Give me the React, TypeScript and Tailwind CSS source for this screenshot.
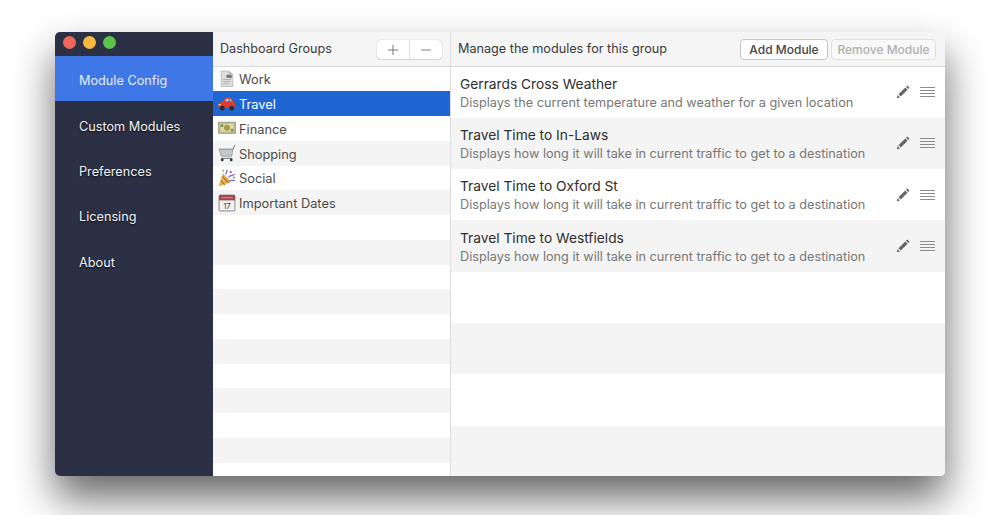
import React from 'react';
import { Plus, Minus } from 'lucide-react';

const navItems = ['Module Config', 'Custom Modules', 'Preferences', 'Licensing', 'About'];

const WorkIcon = () => (
  <svg width="18" height="18" viewBox="0 0 17 17">
    <path d="M3 1h7l4 3v11.500H3z" fill="#dededc" stroke="#aeaeab" strokeWidth="0.7" />
    <path d="M10 1v3h4z" fill="#bdbdb9" />
    <rect x="8" y="4.500" width="5" height="3" fill="#77777a" />
    <path d="M4.500 9h8M4.500 11h8M4.500 13h6" stroke="#aaaaa7" strokeWidth="0.8" />
  </svg>
);

const CarIcon = () => (
  <svg width="18" height="18" viewBox="0 0 17 17">
    <path d="M4.500 6l2.300-3.500h5.400l2 3.500 2 1.500v4.500H0.500V9l1.500-2z" fill="#dc3b30" />
    <path d="M6.500 6l1.500-2.500H10V6zM11 3.500h.8l1.300 2.500H11z" fill="#9fd0ee" />
    <circle cx="4" cy="12.500" r="2.300" fill="#2c2c30" />
    <circle cx="13" cy="12.500" r="2.300" fill="#2c2c30" />
    <rect x="0.500" y="8.500" width="2" height="1.300" fill="#f5d76b" />
  </svg>
);

const MoneyIcon = () => (
  <svg width="18" height="18" viewBox="0 0 17 17">
    <rect x="0.500" y="3" width="16" height="10.500" fill="#b9bd94" stroke="#8f9370" strokeWidth="0.7" />
    <rect x="2.500" y="4.500" width="12" height="7.500" fill="#e3d9a2" />
    <circle cx="8.500" cy="8.200" r="2.800" fill="#a39a52" />
    <path d="M2.500 5h2.500v2.500h-2.500zM12 9.200h2.500v2.500H12z" fill="#84905f" />
  </svg>
);

const CartIcon = () => (
  <svg width="18" height="18" viewBox="0 0 17 17">
    <path d="M1 5h13l2-4" fill="none" stroke="#85888c" strokeWidth="1.100" />
    <path d="M1 5l2 6.500h10L14 5z" fill="#c5c8cb" stroke="#909396" strokeWidth="0.7" />
    <path d="M3 13.500h10.500" stroke="#85888c" strokeWidth="1.100" />
    <circle cx="4" cy="15" r="1.300" fill="#333" />
    <circle cx="12.500" cy="15" r="1.300" fill="#333" />
  </svg>
);

const PartyIcon = () => (
  <svg width="18" height="18" viewBox="0 0 17 17">
    <path d="M0.500 16.500L4.500 4l8.500 8z" fill="#e5b64a" />
    <path d="M2.500 11l4 4M4 7l6 6" stroke="#b06a3c" strokeWidth="1.200" />
    <path d="M7 5c2-1 0-2.500 2-4M10 8c1-2.500 3-1 6-3M11 11c2-1 3 0 5 0" fill="none" stroke="#7a5ac8" strokeWidth="1.100" />
    <circle cx="12" cy="3" r="1.100" fill="#d8477a" />
    <circle cx="15" cy="8" r="1" fill="#4a9fd8" />
    <circle cx="5" cy="1.500" r="0.900" fill="#5ab55a" />
  </svg>
);

const CalendarIcon = () => (
  <svg width="18" height="18" viewBox="0 0 17 17">
    <rect x="1" y="1" width="15" height="15" rx="1" fill="#f2f2f0" stroke="#66666a" strokeWidth="0.7" />
    <rect x="1" y="1" width="15" height="5" fill="#a2454a" />
    <path d="M3 3.500h11" stroke="#d9a3a5" strokeWidth="0.8" />
    <text x="8.500" y="14" fontSize="7.500" textAnchor="middle" fill="#444" fontFamily="Inter, sans-serif">17</text>
  </svg>
);

const PencilIcon = () => (
  <svg width="14" height="14" viewBox="0 0 14 14">
    <path d="M9.300 2.400l2.300 2.300-6.800 6.800-2.300-2.300z" fill="#666" />
    <path d="M10 1.700l.8-.8c.3-.3.700-.3 1 0l1.300 1.300c.3.300.3.700 0 1l-.8.800z" fill="#666" />
    <path d="M1.600 10l2.400 2.400-3.200.9z" fill="#666" />
  </svg>
);

const Grip = () => (
  <div className="flex w-[15px] flex-col gap-[2px]">
    <div className="h-px bg-[#8c8c8c]" />
    <div className="h-px bg-[#8c8c8c]" />
    <div className="h-px bg-[#8c8c8c]" />
    <div className="h-px bg-[#8c8c8c]" />
  </div>
);

const groups = [
  { name: 'Work', icon: <WorkIcon /> },
  { name: 'Travel', icon: <CarIcon />, selected: true },
  { name: 'Finance', icon: <MoneyIcon /> },
  { name: 'Shopping', icon: <CartIcon />, gray: true },
  { name: 'Social', icon: <PartyIcon /> },
  { name: 'Important Dates', icon: <CalendarIcon />, gray: true },
];

const modules = [
  { title: 'Gerrards Cross Weather', desc: 'Displays the current temperature and weather for a given location' },
  { title: 'Travel Time to In-Laws', desc: 'Displays how long it will take in current traffic to get to a destination' },
  { title: 'Travel Time to Oxford St', desc: 'Displays how long it will take in current traffic to get to a destination' },
  { title: 'Travel Time to Westfields', desc: 'Displays how long it will take in current traffic to get to a destination' },
];

export default function App() {
  return (
    <div className="h-[515px] w-[1000px] overflow-hidden bg-white px-[55px] pt-[32px] font-['Inter','Liberation_Sans',sans-serif]">
      <div className="flex h-[444px] overflow-hidden rounded-[5px] shadow-[0_22px_40px_rgba(0,0,0,0.6)]">
        {/* sidebar */}
        <div className="w-[158px] shrink-0 bg-[#2b3044]">
          <div className="flex h-[24px] items-start gap-[7px] pl-[8px] pt-[4px]">
            <div className="h-[13px] w-[13px] rounded-full bg-[#f0665a]" />
            <div className="h-[13px] w-[13px] rounded-full bg-[#f5b93e]" />
            <div className="h-[13px] w-[13px] rounded-full bg-[#5ac44c]" />
          </div>
          {navItems.map((item, i) => (
            <div
              key={item}
              className={`flex h-[45.400px] items-center pl-[24px] pt-[4px] text-[12.700px] ${
                i === 0 ? 'bg-[#3f78e6] text-[#e4ecff]' : 'text-[#f2f2f2] [text-shadow:0_1px_2px_rgba(0,0,0,0.8)]'
              }`}
            >
              {item}
            </div>
          ))}
        </div>

        {/* groups */}
        <div className="flex w-[238px] shrink-0 flex-col border-r border-[#dcdcdc] bg-white">
          <div className="flex h-[34.500px] shrink-0 items-center justify-between border-b border-[#d8d8d8] bg-[#f5f5f5] pl-[7px] pr-[8px] pt-[2px]">
            <span className="text-[12.600px] text-[#3a3a3a]">Dashboard Groups</span>
            <div className="flex h-[19px] w-[65px] rounded-[4px] bg-white shadow-[0_0_1px_rgba(0,0,0,0.4),0_1px_1px_rgba(0,0,0,0.1)]">
              <div className="flex flex-1 items-center justify-center border-r border-[#e2e2e2] text-[#555]">
                <Plus size={16} strokeWidth={1.2} />
              </div>
              <div className="flex flex-1 items-center justify-center text-[#666]">
                <Minus size={16} strokeWidth={1.2} />
              </div>
            </div>
          </div>
          <div className="flex-1 overflow-hidden">
            {groups.map((g) => (
              <div
                key={g.name}
                className={`flex h-[24.750px] items-center gap-[3px] pl-[5px] text-[12.800px] ${
                  g.selected ? 'bg-[#2066d2] text-white' : g.gray ? 'bg-[#f4f4f4] text-[#4a4a4a]' : 'text-[#4a4a4a]'
                }`}
              >
                {g.icon}
                <span className="pt-[2px]">{g.name}</span>
              </div>
            ))}
            {[0, 1, 2, 3, 4, 5, 6, 7, 8, 9, 10].map((i) => (
              <div key={i} className={`h-[24.750px] ${i % 2 === 1 ? 'bg-[#f4f4f4]' : 'bg-white'}`} />
            ))}
          </div>
        </div>

        {/* modules */}
        <div className="flex min-w-0 flex-1 flex-col bg-white">
          <div className="flex h-[34.500px] shrink-0 items-center justify-between border-b border-[#d8d8d8] bg-[#f5f5f5] pl-[7px] pr-[9px] pt-[2px]">
            <span className="text-[12.650px] text-[#3a3a3a]">Manage the modules for this group</span>
            <div className="flex gap-[3px]">
              <div className="flex h-[21px] w-[88px] items-center justify-center rounded-[4px] border border-[#c4c4c4] bg-white text-[12px] font-medium text-[#444]">
                Add Module
              </div>
              <div className="flex h-[21px] w-[105px] items-center justify-center rounded-[4px] border border-[#e0e0e0] bg-[#f8f8f8] text-[12px] font-medium text-[#b0b0b0]">
                Remove Module
              </div>
            </div>
          </div>
          <div className="flex-1 overflow-hidden">
            {modules.map((m, i) => (
              <div
                key={m.title}
                className={`flex h-[51.300px] items-center justify-between pl-[9px] pr-[10px] ${i % 2 === 1 ? 'bg-[#f4f4f4]' : 'bg-white'}`}
              >
                <div className="pt-[2px]">
                  <div className="text-[13.750px] leading-[18px] text-[#2e2e2e]">{m.title}</div>
                  <div className="pt-[1px] text-[12.700px] leading-[18px] text-[#777]">{m.desc}</div>
                </div>
                <div className="flex items-center gap-[10px]">
                  <PencilIcon />
                  <Grip />
                </div>
              </div>
            ))}
            {[0, 1, 2, 3].map((i) => (
              <div key={i} className={`h-[51.300px] ${i % 2 === 1 ? 'bg-[#f4f4f4]' : 'bg-white'}`} />
            ))}
          </div>
        </div>
      </div>
    </div>
  );
}
